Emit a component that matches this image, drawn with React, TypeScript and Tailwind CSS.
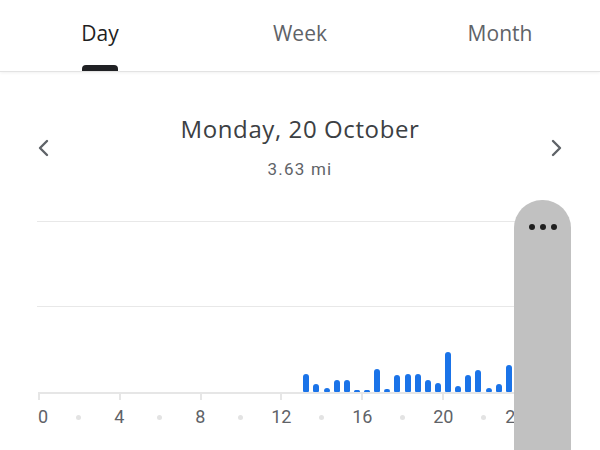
import React from "react";

const heights: Record<number, number> = {
  26: 18, 27: 8, 28: 4, 29: 12, 30: 12, 31: 2, 32: 2, 33: 23, 34: 3, 35: 17,
  36: 18, 37: 18, 38: 12, 39: 9, 40: 40, 41: 6, 42: 17, 43: 22, 44: 4, 45: 8, 46: 27,
};

const axisItems = [
  "0", "", "4", "", "8", "", "12", "", "16", "", "20", "", "24",
];

function Chevron({ dir }: { dir: "left" | "right" }) {
  return (
    <svg width="16" height="20" viewBox="0 0 16 20" fill="none">
      {dir === "left" ? (
        <path d="M11 3 L4 10 L11 17" stroke="#5f6368" strokeWidth="2.4" strokeLinecap="round" strokeLinejoin="round" />
      ) : (
        <path d="M5 3 L12 10 L5 17" stroke="#5f6368" strokeWidth="2.4" strokeLinecap="round" strokeLinejoin="round" />
      )}
    </svg>
  );
}

export default function App() {
  const slots = Array.from({ length: 48 }, (_, i) => heights[i] ?? 0);
  return (
    <div className="relative w-[600px] h-[450px] overflow-hidden bg-white font-['Roboto',sans-serif]">
      <header className="grid grid-cols-3 h-[72px] border-b border-[#e3e3e3] shadow-[0_1px_3px_rgba(0,0,0,0.06)]">
        {["Day", "Week", "Month"].map((t, i) => (
          <div key={t} className="flex flex-col items-center justify-between pt-[18px]">
            <span
              className={
                i === 0
                  ? "font-['Open_Sans',sans-serif] text-[21px] leading-[30px] font-medium text-[#1f1f1f]"
                  : "font-['Open_Sans',sans-serif] text-[21px] leading-[30px] font-medium text-[#5f6368]"
              }
            >
              {t}
            </span>
            {i === 0 ? (
              <div className="w-[36px] h-[6px] rounded-t-[4px] bg-[#202124]" />
            ) : (
              <div className="h-[6px]" />
            )}
          </div>
        ))}
      </header>

      <div className="flex items-start justify-between pl-[36px] pr-[36px] pt-[40px]">
        <div className="pt-[26px]">
          <Chevron dir="left" />
        </div>
        <div className="flex flex-col items-center">
          <div className="font-['Open_Sans',sans-serif] text-[24px] leading-[34px] tracking-[0.6px] text-[#3c4043]">Monday, 20 October</div>
          <div className="mt-[12px] text-[17px] leading-[22px] text-[#5f6368] tracking-[1.2px]">3.63 mi</div>
        </div>
        <div className="pt-[26px]">
          <Chevron dir="right" />
        </div>
      </div>

      <div className="ml-[37px] mt-[41px] w-[488px]">
        <div className="grid">
          <div className="col-start-1 row-start-1 flex flex-col">
            <div className="h-[1px] bg-[#e8e8e8]" />
            <div className="h-[84px]" />
            <div className="h-[1px] bg-[#e8e8e8]" />
            <div className="h-[85px]" />
          </div>
          <div className="col-start-1 row-start-1 flex items-end pl-[1px] h-[171px]">
            {slots.map((h, i) => (
              <div key={i} className="flex w-[10.125px] justify-center items-end">
                {h > 0 && (
                  <div
                    className="w-[6px] rounded-t-[3px] rounded-b-[1px] bg-[#1a73e8]"
                    style={{ height: `${h}px` }}
                  />
                )}
              </div>
            ))}
          </div>
        </div>
        <div className="ml-[1px] h-[2px] bg-[#e6e6e6]" />
        <div className="flex justify-between pl-[1px]">
          {Array.from({ length: 7 }).map((_, i) => (
            <div key={i} className="w-[2px] h-[6px] bg-[#e6e6e6]" />
          ))}
        </div>
      </div>

      <div className="flex ml-[18px] mt-[5px] h-[24px] items-center">
        {axisItems.map((t, i) => (
          <div
            key={i}
            className={
              i === 0
                ? "w-[40.5px] pl-[20px] text-left text-[18px] leading-[24px] text-[#5f6368]"
                : i === 12
                ? "w-[40.5px] pr-[19px] flex justify-end text-[18px] leading-[24px] text-[#5f6368]"
                : "w-[40.5px] flex justify-center text-[18px] leading-[24px] text-[#5f6368]"
            }
          >
            {t ? (
              <span className="whitespace-nowrap">{t}</span>
            ) : (
              <span className="block w-[5px] h-[5px] rounded-full bg-[#e3e3e3]" />
            )}
          </div>
        ))}
      </div>

      <div className="absolute left-[514px] top-[200px] w-[57px] h-[280px] rounded-t-[28px] bg-[#c1c1c1] flex justify-center pt-[24px] gap-[5px]">
        <span className="w-[6px] h-[6px] rounded-full bg-[#1f1f1f]" />
        <span className="w-[6px] h-[6px] rounded-full bg-[#1f1f1f]" />
        <span className="w-[6px] h-[6px] rounded-full bg-[#1f1f1f]" />
      </div>
    </div>
  );
}
